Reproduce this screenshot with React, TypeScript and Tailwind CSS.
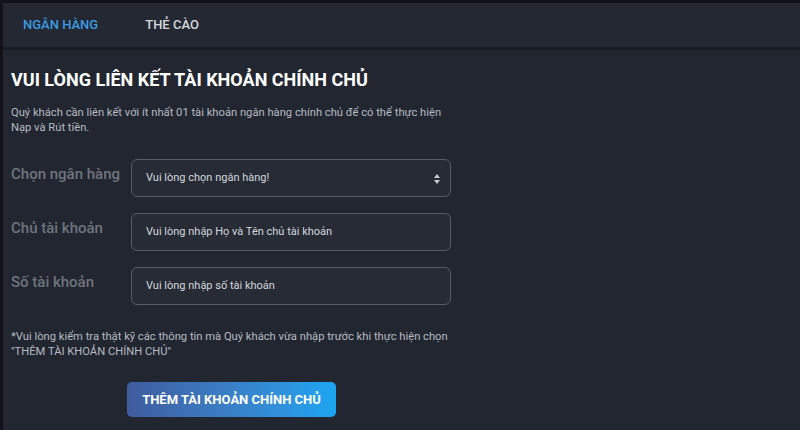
import React from 'react'

const font = { fontFamily: 'Roboto, "Noto Sans", sans-serif' }

function Field({ label, placeholder, select }: { label: string; placeholder: string; select?: boolean }) {
  return (
    <div className="flex items-start">
      <div className="w-[120px] shrink-0 pt-[5px] text-[15px] leading-[20px] font-medium text-[#6f747e]">{label}</div>
      <div className="relative w-[320px] h-[38px] rounded-[6px] border border-[#575c68] bg-[#272b35] flex items-center pl-[14px] text-[11px] text-[#d4d7dc]">
        {placeholder}
        {select && (
          <svg className="absolute right-[10px] top-[14px]" width="6" height="10" viewBox="0 0 6 10">
            <path d="M3 0 L6 4 L0 4 Z" fill="#c9ccd2" />
            <path d="M3 10 L6 6 L0 6 Z" fill="#c9ccd2" />
          </svg>
        )}
      </div>
    </div>
  )
}

export default function App() {
  return (
    <div className="w-[800px] h-[430px] bg-[#111318] pl-[3px] pt-[3px] flex overflow-hidden" style={font}>
      <div className="flex-1 flex flex-col bg-[#222630]">
        {/* TABS */}
        <div className="h-[44px] bg-[#242832] flex items-center text-[13px] font-medium">
          <div className="ml-[20px] text-[#3b9be2]">NGÂN HÀNG</div>
          <div className="ml-[47px] text-[#d6d8dc]">THẺ CÀO</div>
        </div>
        <div className="h-[3px] bg-[#191c23]" />

        {/* CONTENT */}
        <div className="px-[8px] pt-[18px] flex flex-col">
          <h1 className="text-[18px] leading-[24px] font-bold text-white">VUI LÒNG LIÊN KẾT TÀI KHOẢN CHÍNH CHỦ</h1>
          <p className="mt-[13px] text-[11.2px] leading-[15px] text-[#b6bac1] w-[445px]">
            Quý khách cần liên kết với ít nhất 01 tài khoản ngân hàng chính chủ để có thể thực hiện Nạp và Rút tiền.
          </p>

          <div className="mt-[24px] flex flex-col gap-[16px]">
            <Field label="Chọn ngân hàng" placeholder="Vui lòng chọn ngân hàng!" select />
            <Field label="Chủ tài khoản" placeholder="Vui lòng nhập Họ và Tên chủ tài khoản" />
            <Field label="Số tài khoản" placeholder="Vui lòng nhập số tài khoản" />
          </div>

          <p className="mt-[24px] text-[11.2px] leading-[15px] text-[#b6bac1] w-[455px]">
            *Vui lòng kiểm tra thật kỹ các thông tin mà Quý khách vừa nhập trước khi thực hiện chọn "THÊM TÀI KHOẢN CHÍNH CHỦ"
          </p>

          <button className="mt-[23px] ml-[116px] w-[209px] h-[35px] rounded-[5px] bg-gradient-to-r from-[#3f5c9e] to-[#1aa5f2] text-white text-[13px] font-bold">
            THÊM TÀI KHOẢN CHÍNH CHỦ
          </button>
        </div>
      </div>
    </div>
  )
}
